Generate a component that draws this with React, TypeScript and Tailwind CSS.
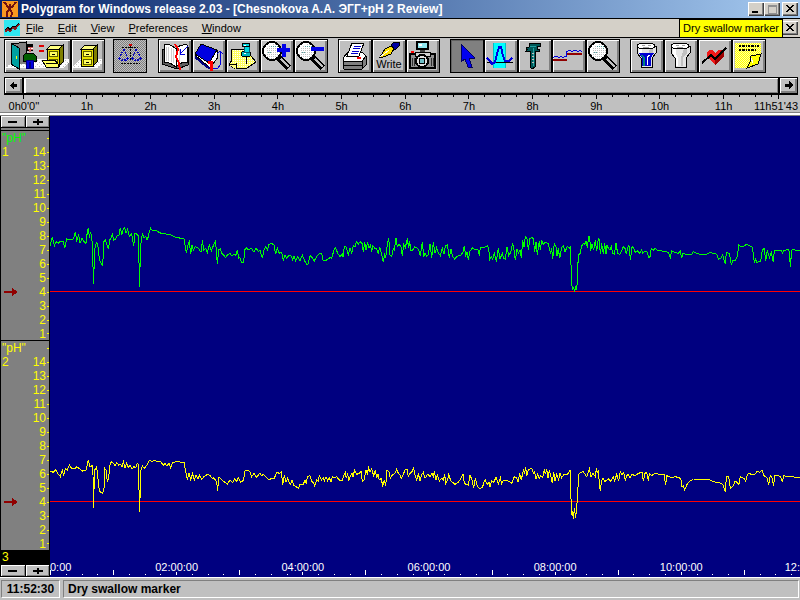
import type { ReactNode } from "react";
import clsx from "clsx";

type Segment = { dx: number; points: string };

// Samples are kept in thirds of a pixel, one segment per stretch of the recording.
const channel1: Segment[] = [
  {
    dx: -150,
    points:
      "150,92 157,65 163,92 168,80 175,85 180,78 190,78 194,100 200,72 210,73 218,75 222,65 226,50 230,76 236,60 240,85 246,70 252,80 258,85 262,50 265,38 268,68 271,50 275,65 278,100 280,208 281,160 284,160 285,100 290,80 295,100 298,135 303,145 308,150 312,80 316,75 320,85 325,103 329,75 334,68 337,55 341,75 347,72 352,62 357,60 361,38 365,60 369,45 374,38 378,55 383,42 388,65 395,55 401,93 405,55 412,58 416,65 418,217 420,155 422,155 423,85 427,55 432,68 438,65 441,75 445,65 448,50 452,40 456,45 470,48 485,56 510,58 525,66 552,72 555,90 559,115 565,85 568,80 572,118 576,90 580,105 586,95 594,98 600,108 604,110 607,75 611,105 617,100 622,112 628,90 634,108 640,92 646,80 649,105 652,148 656,105 661,102 665,115 672,122 677,128 682,120 690,115 695,122 702,118 707,122 712,105 716,130 720,128 724,142 731,142 734,105 738,98 745,105 755,100 762,112 768,98 775,110",
  },
  {
    dx: 630,
    points:
      "0,105 7,130 12,105 17,95 22,105 27,88 35,85 42,90 47,118 52,100 58,115 65,112 70,135 75,120 80,130 88,120 95,125 98,135 102,122 107,138 113,125 120,138 127,120 134,138 140,148 144,148 150,122 157,128 163,138 168,128 175,118 185,115 190,138 200,135 210,128 215,130 222,105 227,98 233,115 240,125 247,118 249,125 253,95 258,95 265,120 270,100 275,115 280,92 285,95 289,80 295,88 300,80 306,85 310,112 314,82 318,105 323,82 327,100 332,90 335,112 338,92 345,100 350,102 355,118 359,95 365,118 370,142 374,115 377,130 382,88 386,68 390,120 395,125 400,100 403,105 408,68 412,95 417,88 423,95 427,122 431,88 436,98 442,70 446,100 449,78 452,105 458,105 464,95 475,102 481,122 487,80 491,125 495,115 500,125 505,118 510,88 515,128 520,82 525,115 530,98 535,115 541,122 547,100 552,118 556,92 562,90 568,128 573,102 578,125 584,132 590,125 597,122 603,120 609,112 613,92 617,122 621,112 625,135 630,108 638,98 645,105 653,102 658,122 661,98 670,98 682,92 686,100 689,135 694,125 698,132 703,115 709,140 715,100 720,132 727,115 731,130 736,132 741,95 746,122 752,112 758,85 762,105 766,135 771,102 775,115",
  },
  {
    dx: 1410,
    points:
      "0,105 4,130 8,75 12,95 16,65 21,72 25,105 30,70 36,68 40,72 44,110 48,80 52,120 58,78 61,105 65,75 69,88 75,82 85,85 88,100 92,118 95,100 98,132 103,85 108,95 111,122 115,100 119,130 125,98 130,92 135,110 142,95 148,100 152,92 153,150 155,205 158,225 161,215 163,230 166,218 168,225 172,205 173,155 176,120 181,115 184,95 190,85 195,88 198,78 202,98 206,65 209,65 212,108 216,88 221,105 226,75 230,108 235,72 238,75 241,118 245,85 250,118 254,85 258,118 261,90 265,100 270,105 274,95 278,115 283,118 288,85 293,115 300,118 306,105 310,95 315,100 319,118 325,92 328,95 331,135 336,95 341,98 345,112 352,108 360,115 365,105 368,115 375,108 382,112 386,128 390,125 394,100 400,105 405,100 412,105 425,108 435,110 445,112 451,128 455,108 465,112 475,115 481,108 485,130 488,115 500,118 515,118 520,110 530,115 540,118 560,118 570,113 580,115 590,118 595,133 602,130 608,118 611,130 616,148 619,112 628,115 634,150 639,135 645,138 652,125 656,90 663,95 672,93 680,88 690,93 697,97 701,125 703,145 706,130 710,143 722,138 727,105 733,100 737,138 742,105 748,128 754,112 760,142 763,105 775,105 785,108 787,115 792,107 804,103 808,110 811,157 815,105 822,103 830,107 840,107",
  },
];

const channel2: Segment[] = [
  {
    dx: -150,
    points:
      "150,78 160,82 167,75 175,88 181,95 187,75 191,92 196,70 202,75 208,60 215,70 225,72 230,65 240,72 248,78 258,75 265,45 270,65 277,62 279,90 280,188 281,135 283,130 284,75 290,65 293,90 296,125 300,140 308,145 312,130 314,70 318,75 322,110 326,100 329,65 333,50 340,55 345,62 350,52 356,60 362,58 366,65 370,50 375,70 380,55 385,68 390,60 396,72 402,65 407,68 412,55 416,60 418,200 421,138 423,75 427,62 432,70 437,65 442,58 448,45 455,50 465,46 472,50 480,48 490,60 495,55 500,62 507,55 512,68 518,52 530,50 552,52 556,75 562,105 567,85 572,105 578,85 583,105 588,90 594,102 599,90 605,103 612,95 622,88 630,92 636,100 640,98 646,105 650,112 653,138 656,98 662,100 668,108 675,112 682,118 690,105 698,112 704,100 710,110 715,98 722,112 731,105 734,78 742,75 750,80 755,95 762,85 770,98 778,85",
  },
  {
    dx: 630,
    points:
      "0,85 5,92 10,88 20,98 27,105 35,100 42,102 50,82 58,85 64,80 68,120 73,90 78,112 83,100 88,115 92,118 96,105 102,122 108,125 115,130 120,118 130,118 135,105 139,118 142,95 150,92 155,110 160,112 164,122 170,105 175,108 178,92 184,105 190,98 193,108 198,95 203,108 208,98 213,112 217,95 223,98 230,95 238,105 246,108 250,95 256,82 259,100 263,85 266,108 270,95 276,85 279,95 284,75 290,88 298,85 303,78 307,110 312,105 318,75 322,85 326,68 330,80 335,72 341,92 346,75 350,100 354,88 358,105 364,100 368,125 373,105 377,122 381,75 387,80 391,100 397,90 405,85 410,72 415,85 420,90 424,100 430,88 435,75 441,72 445,95 450,85 456,80 461,68 465,90 470,105 475,85 480,108 485,88 490,82 495,100 503,88 510,95 516,85 520,95 523,78 528,105 532,90 538,108 545,100 550,105 554,88 557,115 563,105 566,85 572,108 578,112 585,118 595,112 603,100 609,88 613,115 618,118 625,120 630,90 636,105 641,128 646,98 652,125 658,130 667,128 672,112 676,105 681,118 687,112 690,125 695,108 702,112 708,95 715,118 721,98 725,115 730,105 738,105 748,110 756,115 763,95 770,98 774,110 779,85",
  },
  {
    dx: 1410,
    points:
      "0,90 4,105 10,75 14,85 17,65 20,92 25,75 35,70 40,85 44,80 48,103 53,88 58,100 62,92 68,98 73,72 76,88 80,72 84,100 88,75 93,95 97,115 101,80 105,108 110,88 116,105 120,85 125,98 132,88 140,90 145,85 150,75 152,140 155,205 158,200 160,222 163,190 165,205 167,220 170,180 173,165 175,90 182,82 190,80 195,88 200,95 204,85 208,72 213,95 219,85 226,95 229,70 232,85 235,75 238,115 241,138 244,110 249,98 254,110 265,102 272,108 280,95 284,108 290,88 296,108 301,80 306,90 311,82 316,105 320,92 325,88 330,98 336,88 345,92 355,85 366,82 370,108 375,85 380,82 385,108 388,85 395,92 405,85 420,88 432,88 437,120 440,92 455,98 465,95 478,98 483,105 485,125 490,122 494,135 500,120 508,110 520,102 540,103 565,103 580,110 597,113 608,118 616,142 619,95 626,95 631,130 640,122 645,108 651,112 657,118 661,95 667,98 672,100 677,108 682,88 688,85 697,90 705,88 712,78 718,82 726,76 732,92 741,98 746,120 751,92 756,98 761,123 764,92 775,92 782,95 787,112 791,92 805,95 840,97",
  },
];

function toPoints(segments: Segment[], dy: number) {
  return segments
    .flatMap(({ dx, points }) =>
      points.split(" ").map((pair) => {
        const [x, y] = pair.split(",").map(Number);
        return `${x + dx},${y + dy}`;
      })
    )
    .join(" ");
}

function Lens() {
  return (
    <>
      <path d="M18 18 L28 28" stroke="#000" strokeWidth="6" />
      <path d="M20 19 L28 27" stroke="#c0c0c0" strokeWidth="2" />
      <circle cx="11" cy="11" r="9" fill="url(#glass)" stroke="#000" strokeWidth="2" />
      <path d="M5 13 A7 7 0 0 1 11 4" stroke="#fff" strokeWidth="2" fill="none" />
      <path d="M10 6 H16 V10 M7 12 H11" stroke="#50a0a0" strokeDasharray="1 1" />
    </>
  );
}

function Cup({ filled }: { filled?: boolean }) {
  return (
    <>
      <path d="M6 6 V13 L10 18 V27 H21 V18 L25 13 V6 Z" fill="#e4e4e4" stroke="#000" />
      <path d="M8 9 H11 V14 L13 18 V26 H11 V18 L8 13 Z" fill="#fff" />
      <path d="M19 9 H22 V13 L18 18 V26 H16 V17 Z" fill="#c0c0c0" />
      {filled && (
        <>
          <path d="M8 13 H23 L20 18 V26 H11 V18 Z" fill="#0000d0" />
          <path d="M10 15 H12 L14 18 V26 H12 V18 Z" fill="#008080" />
          <path d="M17 15 H19 L17 18 V25 H16 V18 Z" fill="#fff" />
        </>
      )}
      <ellipse cx="15" cy="6" rx="9" ry="3" fill="#fff" stroke="#000" />
      <path d="M11 5 H14 M17 5 H20 M12 7 H18" stroke="#a0a0a0" />
    </>
  );
}

function Cabinet() {
  return (
    <>
      <path d="M9 9 L13 5 H25 L21 9 Z" fill="#ffff80" stroke="#000" />
      <path d="M21 9 L25 5 V22 L21 26 Z" fill="#808000" stroke="#000" />
      <rect x="9" y="9" width="12" height="17" fill="#e8e000" stroke="#000" />
      <path d="M11 11 H19 V16 H11 Z M11 19 H19 V24 H11 Z" fill="#ffff60" stroke="#606000" />
      <path d="M14 14 H17 M14 22 H17" stroke="#000" />
    </>
  );
}

const icons: Record<string, ReactNode> = {
  patient: (
    <>
      <path d="M1 27 L12 19 H64 V23 L58 28 H1 Z" fill="url(#floor)" />
      <path d="M7 4 L21 2 V24 H7 Z" fill="#808080" />
      <path d="M6 3 L14 8 V29 L6 24 Z" fill="#00a0a0" stroke="#000" />
      <path d="M7 4 L21 2 V22" stroke="#000" fill="none" />
      <path d="M11 16 V19" stroke="#ff0" />
      <path d="M22 4 H28 V11 H21 V6 Z" fill="#000" />
      <path d="M23 7 H28 V10 H26 V12 H24 V10 H23 Z" fill="#d06060" />
      <path d="M23 8 H25 M26 8 H28" stroke="#fff" />
      <path d="M21 13 H28 L31 16 V21 H28 V20 H21 V21 H18 V16 Z" fill="#006000" stroke="#000" />
      <path d="M21 20 H28 V28 H25 V22 H24 V28 H21 Z" fill="#0000e0" stroke="#000080" />
      <path d="M34 6 H39 M34 11 H39" stroke="#e00000" strokeWidth="2" />
      <g transform="translate(33 0)">
        <Cabinet />
      </g>
      <path d="M37 20 H50 L53 24 V27 H41 Z" fill="#ffff60" stroke="#000" />
      <path d="M41 23 H52" stroke="#000" />
    </>
  ),
  cabinet: (
    <>
      <path d="M1 26 L8 19 H30 V23 L26 28 H1 Z" fill="url(#floor)" />
      <Cabinet />
    </>
  ),
  scales: (
    <>
      <rect width="32" height="32" fill="url(#mesh)" />
      <g fill="none" strokeDasharray="2 1">
        <path d="M8 7 H24 M16 6 V21 M7 23 H26" stroke="#000" />
        <path d="M10 9 L5 18 M10 9 L14 18 M22 9 L18 18 M22 9 L27 18" stroke="#0000c0" />
        <path d="M5 18 Q10 23 14 18 M18 18 Q22 23 27 18" stroke="#0000c0" strokeWidth="2" />
      </g>
      <path d="M15 4 H18 V6 H15 Z" fill="#d00000" />
    </>
  ),
  diary: (
    <>
      <path d="M3 9 L17 13 L29 8 V25 L18 29 L3 24 Z" fill="#606060" stroke="#000" />
      <path d="M5 4 Q12 4 17 9 V27 Q11 22 5 22 Z" fill="#fff" stroke="#000" />
      <path d="M17 9 Q21 4 28 5 V22 Q21 22 17 27 Z" fill="#fff" stroke="#000" />
      <path d="M7 7 V21 M9 7 V21 M12 8 V22 M14 9 V23 M20 9 V23" stroke="#d0d0d0" />
      <path d="M16 4 L19 9 L17 17 L20 23 L21 30" stroke="#f00" strokeWidth="2" fill="none" />
      <path d="M29 6 L21 14 M21 9 V14 H26" stroke="#0000e0" fill="none" />
    </>
  ),
  book: (
    <>
      <path d="M2 15 L17 28 L25 17 L24 10 L8 4 Z" fill="#fff" stroke="#000" />
      <path d="M8 4 L24 10 L16 23 L2 14 Z" fill="#0000e0" stroke="#000" />
      <path d="M2 17 L14 27 L17 28" stroke="#000080" strokeWidth="2" fill="none" />
      <path d="M15 22 H18 V29 H20" stroke="#f00" strokeWidth="3" fill="none" />
      <path d="M20 28 H25 L27 25 V11 M24 14 L27 11 L30 14" stroke="#0000e0" fill="none" />
    </>
  ),
  note: (
    <>
      <path d="M4 10 L18 9 L29 22 L20 28 L9 29 L2 25 L5 20 Z" fill="url(#paper)" stroke="#000" />
      <path d="M2 25 L9 24 V29" stroke="#000" fill="#ffff80" />
      <path d="M19 17 V24" stroke="#000" />
      <ellipse cx="19" cy="14" rx="5" ry="3" fill="#00b8c0" stroke="#000" />
      <path d="M17 6 H22 V12 H17 Z" fill="#00d8e0" stroke="#006070" />
      <ellipse cx="19" cy="5" rx="4" ry="2" fill="#00d8e0" stroke="#000" />
      <path d="M17 5 H19 M17 13 H19" stroke="#fff" />
    </>
  ),
  zoomIn: (
    <>
      <Lens />
      <path d="M23 4 V17 M16 10 H29" stroke="#0000e8" strokeWidth="4" />
    </>
  ),
  zoomOut: (
    <>
      <Lens />
      <path d="M16 9 H29" stroke="#0000e8" strokeWidth="4" />
    </>
  ),
  printer: (
    <>
      <path d="M4 18 L9 12 H23 L27 16 V25 L23 29 H5 Z" fill="#808080" stroke="#000" />
      <path d="M4 18 L9 12 H23 L27 16 L23 21 H5 Z" fill="#fff" stroke="#000" />
      <path d="M13 3 H25 L20 16 H8 Z" fill="#fff" stroke="#000" />
      <path d="M15 6 H22 M14 8 H21 M13 11 H20 M12 13 H19" stroke="#0000d0" />
      <path d="M18 18 H22" stroke="#f00" strokeWidth="2" />
      <path d="M5 25 H23" stroke="#000" />
      <path d="M23 21 V28" stroke="#000" />
    </>
  ),
  write: (
    <>
      <path d="M7 17 L12 9 L18 6 L21 9 L18 14 L10 17 Z" fill="#ffe000" stroke="#000" />
      <path d="M7 17 L16 10" stroke="#fff" />
      <path d="M18 5 L21 2 H26 V6 L22 10 Z" fill="#0000a0" stroke="#000" />
    </>
  ),
  camera: (
    <>
      <path d="M10 2 H21 V9 H10 Z" fill="#90e8f0" stroke="#000" strokeWidth="2" />
      <path d="M12 4 H15 V6 H12 Z" fill="#fff" />
      <path d="M13 10 H18 V13 H13 Z" fill="#404040" />
      <path d="M3 14 H28 V28 H3 Z" fill="#909090" stroke="#000" strokeWidth="2" />
      <path d="M8 12 H23 V16 H8 Z" fill="#d0d0d0" stroke="#000" />
      <path d="M5 18 V26 M7 18 V26 M24 18 V26 M26 18 V26" stroke="#303030" />
      <path d="M4 12 H7" stroke="#f00" strokeWidth="2" />
      <circle cx="15" cy="21" r="6" fill="#e0e0e0" stroke="#000" strokeWidth="2" />
      <circle cx="15" cy="21" r="3" fill="#70c0c8" stroke="#000" />
    </>
  ),
  pointer: <path d="M10 4 V22 L14 19 L17 27 H21 L18 18 H23 V17 Z" fill="#0000f0" stroke="#000060" />,
  wave: (
    <>
      <rect x="8" y="3" width="13" height="25" fill="#0ff" />
      <path d="M8 3 V28 M20 3 V28" stroke="#00c0c8" />
      <path d="M2 22 H28" stroke="#000" />
      <path
        d="M2 18 L5 21 L7 24 L10 22 L12 14 L14 7 H16 L18 16 L20 21 H24 L27 18"
        stroke="#0000e0"
        strokeWidth="2"
        fill="none"
      />
    </>
  ),
  caliper: (
    <>
      <path
        d="M10 3 H21 V6 H18 V9 H20 V11 H16 V27 L13 29 L11 27 V11 H7 L9 9 H7 V8 L10 7 Z"
        fill="#005858"
        stroke="#000"
      />
      <path d="M11 6 H17 M14 8 V26" stroke="#20a0a0" />
      <path d="M13 13 H15 M13 16 H15 M13 19 H15 M13 22 H15" stroke="#c0c0c0" />
    </>
  ),
  steps: (
    <>
      <path d="M0 20 H14 M14 14 H29" stroke="#900000" strokeWidth="2" />
      <path
        d="M0 18 L2 16 H4 L6 18 L8 16 L10 18 L12 16 H13 V11 H15 L17 10 L19 12 L21 10 H23 L25 12 L27 10 L29 12"
        stroke="#0000e0"
        fill="none"
      />
    </>
  ),
  find: <Lens />,
  cupFull: <Cup filled />,
  cupEmpty: <Cup />,
  heart: (
    <>
      <path d="M16 25 L8 17 V12 L11 10 H14 L16 13 L19 10 H22 L25 12 V16 Z" fill="#f01818" />
      <path d="M16 25 L25 16 V12 L22 10 L20 16 L16 21 Z" fill="#a00000" />
      <path d="M3 23 L12 15 L16 19 L27 8" stroke="#000" strokeWidth="2" fill="none" />
    </>
  ),
  memo: (
    <>
      <path d="M2 3 H28 V16 L18 28 H2 Z" fill="url(#memo)" />
      <path d="M6 6 H26 M6 10 H24" stroke="#000" strokeWidth="2" strokeDasharray="2 1 3 1 1 1" />
      <path d="M28 14 L25 24 L14 28 L17 22 L18 16 Z" fill="#ff0" stroke="#000" />
      <path d="M18 18 L20 23" stroke="#fff" />
    </>
  ),
};

const groups: { gap: string; tools: { id: string; label: string }[] }[] = [
  {
    gap: "",
    tools: [
      { id: "patient", label: "Patient file" },
      { id: "cabinet", label: "Archive" },
    ],
  },
  { gap: "ml-2", tools: [{ id: "scales", label: "Balance" }] },
  {
    gap: "ml-[11px]",
    tools: [
      { id: "diary", label: "Diary" },
      { id: "book", label: "Report" },
      { id: "note", label: "Note" },
      { id: "zoomIn", label: "Zoom in" },
      { id: "zoomOut", label: "Zoom out" },
    ],
  },
  {
    gap: "ml-2.5",
    tools: [
      { id: "printer", label: "Print" },
      { id: "write", label: "Write" },
      { id: "camera", label: "Snapshot" },
    ],
  },
  {
    gap: "ml-2.5",
    tools: [
      { id: "pointer", label: "Pointer" },
      { id: "wave", label: "Wave marker" },
      { id: "caliper", label: "Caliper" },
      { id: "steps", label: "Baseline" },
      { id: "find", label: "Find" },
    ],
  },
  {
    gap: "ml-2.5",
    tools: [
      { id: "cupFull", label: "Wet swallow marker" },
      { id: "cupEmpty", label: "Dry swallow marker" },
      { id: "heart", label: "Heartburn marker" },
      { id: "memo", label: "Memo" },
    ],
  },
];

function ToolButton({ id, label }: { id: string; label: string }) {
  const wide = id === "patient";
  return (
    <button
      aria-label={label}
      className={clsx(
        "relative h-[34px] shrink-0 border border-black",
        wide ? "w-[67px]" : "w-[34px]",
        id === "pointer"
          ? "bg-[#808080] shadow-[inset_1px_1px_0_#606060]"
          : "bg-[#c0c0c0] shadow-[inset_1px_1px_0_#fff,inset_-2px_-2px_0_#808080]"
      )}
    >
      <svg
        viewBox={wide ? "0 0 65 32" : "0 0 32 32"}
        className="block h-full w-full"
        shapeRendering="crispEdges"
        fill="none"
      >
        {icons[id]}
      </svg>
      {id === "write" && (
        <span className="absolute inset-x-0 bottom-0 text-center text-[11px] leading-4">Write</span>
      )}
    </button>
  );
}

function WindowButton({ label, children }: { label: string; children: ReactNode }) {
  return (
    <button
      aria-label={label}
      className="h-[14px] w-4 bg-[#d4d0c8] shadow-[inset_1px_1px_0_#fff,inset_-1px_-1px_0_#404040,inset_-2px_-2px_0_#808080]"
    >
      <svg viewBox="0 0 16 14" className="block h-full w-full" shapeRendering="crispEdges" fill="none">
        {children}
      </svg>
    </button>
  );
}

function CloseGlyph() {
  return <path d="M4 3 L11 10 M5 3 L12 10 M11 3 L4 10 M12 3 L5 10" stroke="#000" />;
}

function ScrollArrow({ label, path }: { label: string; path: string }) {
  return (
    <button
      aria-label={label}
      className="h-full w-[17px] bg-[#c0c0c0] shadow-[inset_1px_1px_0_#fff,inset_-2px_-2px_0_#808080]"
    >
      <svg viewBox="0 0 17 15" className="block h-full w-full" shapeRendering="crispEdges">
        <path d={path} />
      </svg>
    </button>
  );
}

function Ruler() {
  const end = 11.86;
  const pos = (h: number) => `${2.9 + (h / end) * 94.4}%`;
  const quarters = Array.from({ length: 48 }, (_, i) => i / 4);
  return (
    <svg className="block h-[17px] w-full text-[11px]" shapeRendering="crispEdges">
      {quarters.map((h) => (
        <line key={h} x1={pos(h)} x2={pos(h)} y1="0" y2={h % 1 === 0 ? 4 : 2} stroke="#000" />
      ))}
      <line x1={pos(end)} x2={pos(end)} y1="0" y2="4" stroke="#000" />
      <g textAnchor="middle">
        <text x="3%" y="15">{`0h0'0''`}</text>
        {[1, 2, 3, 4, 5, 6, 7, 8, 9, 10, 11].map((h) => (
          <text key={h} x={pos(h)} y="15">
            {h}h
          </text>
        ))}
        <text x="97%" y="15">
          11h51'43
        </text>
      </g>
    </svg>
  );
}

function ScaleButtons() {
  return (
    <div className="flex h-3 shrink-0 gap-px bg-black pb-px">
      {["-", "+"].map((sign) => (
        <button
          key={sign}
          aria-label={sign === "-" ? "Compress" : "Expand"}
          className="flex-1 bg-[#c0c0c0] shadow-[inset_1px_1px_0_#fff,inset_-1px_-1px_0_#808080]"
        >
          <svg viewBox="0 0 24 11" className="block h-full w-full" shapeRendering="crispEdges" fill="none">
            <path d={sign === "-" ? "M7 6 H16" : "M7 6 H17 M12 3 V9"} stroke="#000" strokeWidth="2" />
          </svg>
        </button>
      ))}
    </div>
  );
}

function ChannelScale({ index, color }: { index: number; color: string }) {
  return (
    <div className="flex justify-between border-b border-black bg-[#808080] text-[#ff0]">
      <div className="flex w-6 flex-col pl-px text-[12px] leading-[14px]">
        <span className={color}>"pH"</span>
        <span>{index}</span>
        <svg viewBox="0 0 14 8" className="mt-[129px] ml-0.5 h-2 w-3.5" shapeRendering="crispEdges">
          <path d="M0 3 H8 V0 L14 4 L8 8 V5 H0 Z" fill="#900000" />
        </svg>
      </div>
      <ol className="text-right text-[12px] leading-[14px]">
        {Array.from({ length: 15 }, (_, i) => 15 - i).map((n) => (
          <li key={n} className={clsx("flex items-center justify-end gap-px", n === 1 ? "h-[13px]" : "h-[14px]")}>
            {n < 15 && <span>{n}</span>}
            <i className="h-px w-0.5 bg-[#ff0]" />
          </li>
        ))}
      </ol>
    </div>
  );
}

function Traces() {
  return (
    <svg
      viewBox="0 0 2250 1305"
      preserveAspectRatio="none"
      className="block h-[435px] w-full"
      shapeRendering="crispEdges"
      fill="none"
    >
      <g strokeWidth="3">
        <path d="M0 526.5 H2250 M0 1156.5 H2250" stroke="#f00" />
        <polyline points={toPoints(channel1, 297)} stroke="#0f0" />
        <polyline points={toPoints(channel2, 987)} stroke="#ff0" />
      </g>
    </svg>
  );
}

function TimeAxis() {
  const pos = (h: number) => `${0.07 + h * 8.41}%`;
  const quarters = Array.from({ length: 48 }, (_, i) => i / 4);
  return (
    <svg className="mt-auto block h-6 w-full text-[11px]" shapeRendering="crispEdges">
      {quarters.map((h) => {
        const length = h % 1 !== 0 ? 1 : h % 2 === 0 && h > 0 ? 3 : 5;
        return <line key={h} x1={pos(h)} x2={pos(h)} y1={22 - length} y2="22" stroke="#fff" />;
      })}
      <g fill="#fff" textAnchor="middle">
        <text x="0" y="18" textAnchor="start">
          0:00
        </text>
        {["02", "04", "06", "08", "10"].map((h) => (
          <text key={h} x={pos(Number(h))} y="18">
            {h}:00:00
          </text>
        ))}
        <text x="100%" y="18" textAnchor="end">
          12:
        </text>
      </g>
    </svg>
  );
}

export default function App() {
  return (
    <div className="flex min-h-screen flex-col overflow-hidden bg-[#c0c0c0] font-['Liberation_Sans',Arial,sans-serif] text-black">
      <svg className="absolute h-0 w-0" aria-hidden="true">
        <defs>
          <pattern id="mesh" width="2" height="2" patternUnits="userSpaceOnUse">
            <rect width="2" height="2" fill="#c0c0c0" />
            <path d="M0 0 H1 V1 H0 Z M1 1 H2 V2 H1 Z" fill="#808080" />
          </pattern>
          <pattern id="floor" width="4" height="4" patternUnits="userSpaceOnUse">
            <rect width="4" height="4" fill="#fff" />
            <path d="M0 0 H1 V1 H0 Z M2 2 H3 V3 H2 Z" fill="#c0c0c0" />
          </pattern>
          <pattern id="glass" width="2" height="2" patternUnits="userSpaceOnUse">
            <rect width="2" height="2" fill="#fff" />
            <path d="M0 0 H1 V1 H0 Z" fill="#c0c0c0" />
          </pattern>
          <pattern id="paper" width="2" height="2" patternUnits="userSpaceOnUse">
            <rect width="2" height="2" fill="#ffff60" />
            <path d="M0 0 H1 V1 H0 Z" fill="#fff" />
          </pattern>
          <pattern id="memo" width="2" height="2" patternUnits="userSpaceOnUse">
            <rect width="2" height="2" fill="#ff0" />
            <path d="M0 0 H1 V1 H0 Z M1 1 H2 V2 H1 Z" fill="#ffffa0" />
          </pattern>
        </defs>
      </svg>

      <header className="flex h-[19px] items-center border-b border-black bg-linear-to-r from-[#0a246a] to-[#a6caf0] pr-0.5 pl-0.5 text-white">
        <svg viewBox="0 0 16 16" className="h-4 w-4" shapeRendering="crispEdges" fill="none">
          <rect width="16" height="16" fill="#f89820" />
          <path d="M2 1 L7 7 L10 6 L14 1 M8 3 V8 L5 11 V16 M8 8 L10 12 L9 16" stroke="#701010" strokeWidth="2" />
        </svg>
        <h1 className="ml-[3px] flex-1 truncate text-xs font-bold">
          Polygram for Windows release 2.03 - [Chesnokova A.A. ЭГГ+pH 2 Review]
        </h1>
        <div className="flex">
          <WindowButton label="Minimize">
            <path d="M4 10 H10" stroke="#000" strokeWidth="2" />
          </WindowButton>
          <WindowButton label="Maximize">
            <path d="M4 3 H12 V11 H4 Z M4 4 H12" stroke="#909090" />
          </WindowButton>
        </div>
        <div className="ml-0.5 flex">
          <WindowButton label="Close">
            <CloseGlyph />
          </WindowButton>
        </div>
      </header>

      <nav className="relative flex h-[19px] items-center border-b border-black bg-[#d4d0c8] pr-0.5 pl-1 text-[11px]">
        <svg viewBox="0 0 16 16" className="h-4 w-4" shapeRendering="crispEdges" fill="none">
          <rect width="16" height="16" fill="#30e8f0" />
          <path d="M1 12 L4 9 L6 11 L9 7 L11 9 L15 4" stroke="#802020" strokeWidth="2" />
          <path d="M1 10 L4 7 L6 10 L9 6 L11 7 L15 3" stroke="#000" />
        </svg>
        <div className="flex flex-1 gap-3.5 pl-1.5">
          {["File", "Edit", "View", "Preferences", "Window"].map((item) => (
            <button key={item}>
              <u>{item[0]}</u>
              {item.slice(1)}
            </button>
          ))}
        </div>
        <WindowButton label="Close document">
          <CloseGlyph />
        </WindowButton>
        <div
          role="tooltip"
          className="absolute top-0 right-[17px] h-[19px] border border-black bg-[#ff0] px-[3px] text-[11px] leading-[17px]"
        >
          Dry swallow marker
        </div>
      </nav>

      <div className="flex h-[39px] items-start pt-px pl-1">
        {groups.map((group, i) => (
          <div key={i} className={clsx("flex", group.gap)}>
            {group.tools.map((tool) => (
              <ToolButton key={tool.id} {...tool} />
            ))}
          </div>
        ))}
      </div>

      <div className="mr-0.5 ml-1 flex h-[18px] border border-b-2 border-black">
        <ScrollArrow label="Scroll left" path="M5 7 L9 3 V6 H12 V9 H9 V12 Z" />
        <div className="flex-1 border-x-2 border-black shadow-[inset_2px_1px_0_#fff,inset_-1px_-1px_0_#808080]" />
        <ScrollArrow label="Scroll right" path="M13 7 L9 3 V6 H5 V9 H9 V12 Z" />
      </div>
      <Ruler />
      <div className="h-1 border-t border-[#808080] bg-white shadow-[inset_0_-1px_0_#808080]" />

      <main className="flex flex-1 bg-[#000080]">
        <aside className="flex w-[50px] shrink-0 flex-col border-x border-black bg-[#808080]">
          <ScaleButtons />
          <div className="h-[3px] border-b border-black" />
          <ChannelScale index={1} color="text-[#0f0]" />
          <ChannelScale index={2} color="text-[#ff0]" />
          <div className="flex-1 bg-black pl-px text-[12px] leading-3 text-[#ff0]">3</div>
          <ScaleButtons />
        </aside>
        <div className="flex min-w-0 flex-1 flex-col">
          <Traces />
          <TimeAxis />
        </div>
      </main>

      <footer className="flex h-[23px] gap-[3px] border-t border-white px-px pt-0.5 pb-0.5 text-xs font-bold">
        <div className="flex w-[59px] items-center justify-center border border-t-[#808080] border-r-white border-b-white border-l-[#808080]">
          11:52:30
        </div>
        <div className="flex flex-1 items-center border border-t-[#808080] border-r-white border-b-white border-l-[#808080] pl-1">
          Dry swallow marker
        </div>
      </footer>
    </div>
  );
}
